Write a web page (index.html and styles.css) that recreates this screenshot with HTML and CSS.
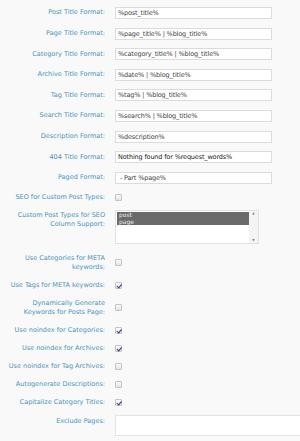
FILE: index.html
```html
<!DOCTYPE html>
<html lang="en">
<head>
  <meta charset="UTF-8">
  <title>SEO Settings</title>
  <meta name="viewport" content="width=device-width, initial-scale=1.0">
  <link rel="stylesheet" href="styles.css">
</head>
<body>

<section class="form">
  <div class="row text"><label class="lbl">Post Title Format:</label><input class="inp" type="text" value="%post_title%"></div>
  <div class="row text"><label class="lbl">Page Title Format:</label><input class="inp" type="text" value="%page_title% | %blog_title%"></div>
  <div class="row text"><label class="lbl">Category Title Format:</label><input class="inp" type="text" value="%category_title% | %blog_title%"></div>
  <div class="row text"><label class="lbl">Archive Title Format:</label><input class="inp" type="text" value="%date% | %blog_title%"></div>
  <div class="row text"><label class="lbl">Tag Title Format:</label><input class="inp" type="text" value="%tag% | %blog_title%"></div>
  <div class="row text"><label class="lbl">Search Title Format:</label><input class="inp" type="text" value="%search% | %blog_title%"></div>
  <div class="row text"><label class="lbl">Description Format:</label><input class="inp" type="text" value="%description%"></div>
  <div class="row text"><label class="lbl">404 Title Format:</label><input class="inp dark" type="text" value="Nothing found for %request_words%"></div>
  <div class="row text"><label class="lbl">Paged Format:</label><input class="inp" type="text" value=" - Part %page%"></div>

  <div class="row check"><label class="lbl">SEO for Custom Post Types:</label><span class="cb"></span></div>

  <div class="row top list-row">
    <label class="lbl">Custom Post Types for SEO Column Support:</label>
    <div class="listbox">
      <div class="options">
        <div class="opt sel">post</div>
        <div class="opt sel">page</div>
      </div>
      <div class="scroll"><span class="arr">&#9650;</span><span class="arr">&#9660;</span></div>
    </div>
  </div>

  <div class="row check"><label class="lbl">Use Categories for META keywords:</label><span class="cb"></span></div>
  <div class="row check"><label class="lbl">Use Tags for META keywords:</label><span class="cb on"></span></div>
  <div class="row check"><label class="lbl">Dynamically Generate Keywords for Posts Page:</label><span class="cb"></span></div>
  <div class="row check"><label class="lbl">Use noindex for Categories:</label><span class="cb on"></span></div>
  <div class="row check"><label class="lbl">Use noindex for Archives:</label><span class="cb on"></span></div>
  <div class="row check"><label class="lbl">Use noindex for Tag Archives:</label><span class="cb"></span></div>
  <div class="row check"><label class="lbl">Autogenerate Descriptions:</label><span class="cb"></span></div>
  <div class="row check"><label class="lbl">Capitalize Category Titles:</label><span class="cb on"></span></div>

  <div class="row top area-row"><label class="lbl">Exclude Pages:</label><div class="area"></div></div>
</section>

</body>
</html>
```

FILE: styles.css
```css
* { box-sizing: border-box; }
html, body { overflow: hidden; }
body { margin: 0; background: #f9f9f9; font-family: "DejaVu Sans", Verdana, sans-serif; font-size: 6.5px; color: #333; }

.form { padding-top: 2.7px; }
.row { display: grid; grid-template-columns: 105px 1fr; column-gap: 10px; align-items: center; }
.row.text { height: 20.6px; }
.row.check { padding: 4.5px 0; }
.row.top { align-items: start; }
.lbl { text-align: right; color: #4a93bd; line-height: 9px; }

.inp {
  width: 157px; height: 12px; margin: 0; padding: 0 2px; border: 1px solid #dcdcdc; background: #fff;
  font-family: inherit; font-size: 6.5px; letter-spacing: -0.15px; line-height: 8px; color: #444; outline: none;
}
.inp.dark { color: #222; }

.cb {
  display: block; width: 7px; height: 7px; border: 1px solid #c4c4c4; border-radius: 1px;
  background: linear-gradient(#fbfbfb, #e4e4e4);
}
.cb.on { position: relative; }
.cb.on::after {
  content: ""; position: absolute; left: 1.5px; top: 0; width: 1.5px; height: 3.5px;
  border: solid #2d3f7a; border-width: 0 1.2px 1.2px 0; transform: rotate(40deg);
}

.list-row { padding: 4px 0 5px; }
.list-row .lbl { padding-top: 1px; }
.listbox { display: flex; width: 144px; height: 34px; border: 1px solid #e2e2e2; background: #fff; }
.options { flex: 1; padding: 1px 0 0 1px; }
.opt { line-height: 6.5px; padding-left: 2px; font-size: 6px; }
.opt.sel { background: #6a6a6a; color: #e8e8e8; }
.scroll { width: 9px; background: #f4f4f4; display: flex; flex-direction: column; justify-content: space-between; align-items: center; }
.arr { font-size: 3px; color: #777; line-height: 5px; }

.area-row { padding-top: 4px; }
.area-row .lbl { padding-top: 1.5px; }
.area { width: 200px; height: 21px; border: 1px solid #e4e4e4; background: #fff; }
```
